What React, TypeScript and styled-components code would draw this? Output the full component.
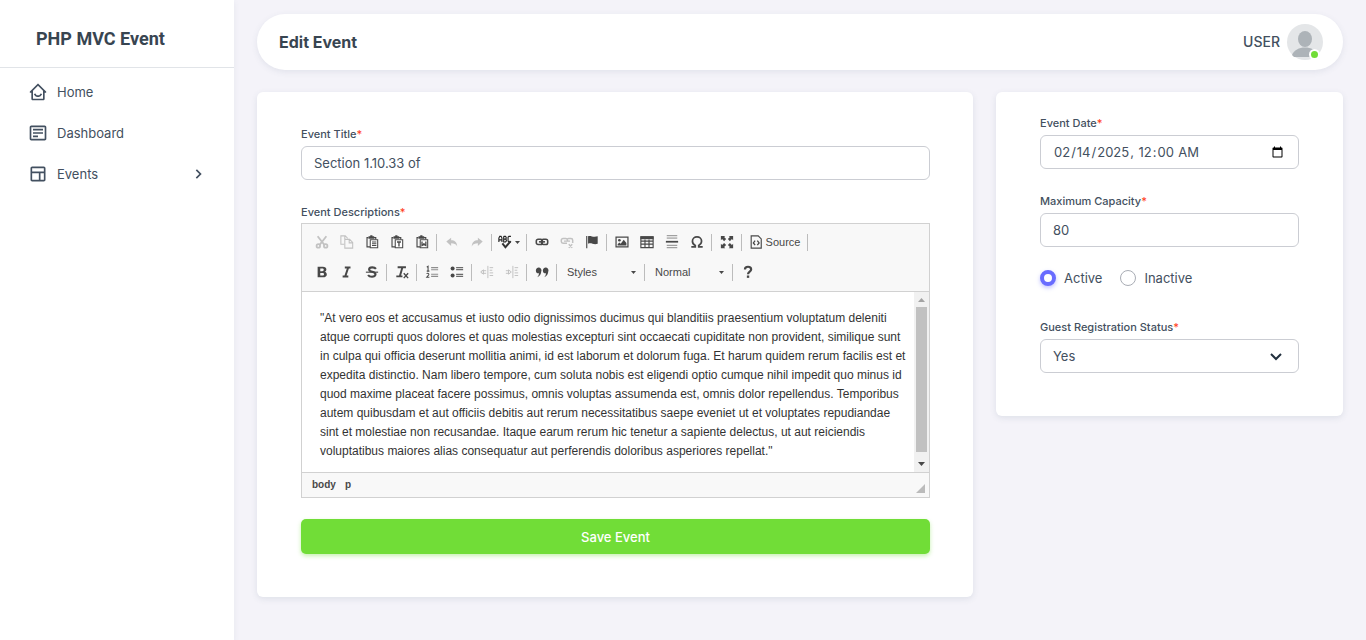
import React from "react";
import styled, { createGlobalStyle, css } from "styled-components";
import { BiChevronDown, BiChevronRight, BiDetail, BiHomeSmile, BiLayout } from "react-icons/bi";

const sans = `Inter, "Liberation Sans", sans-serif`;
const arial = `"Liberation Sans", Arial, sans-serif`;

const GlobalStyle = createGlobalStyle`
  * { box-sizing: border-box; }
  body {
    margin: 0;
    background: #f4f3f9;
    color: #435060;
    font: 13px/20px ${sans};
  }
  button, input, select { font: inherit; color: inherit; }
`;

const Page = styled.div`
  display: flex;
  min-height: 100vh;
`;

const Sidebar = styled.aside`
  flex: 0 0 234px;
  background: #fff;
  box-shadow: 0 2px 6px rgba(67, 89, 113, 0.08);
`;

const Brand = styled.a`
  display: block;
  padding: 27px 36px 16px;
  border-bottom: 1px solid #e1e4e8;
  color: #384551;
  font-family: Roboto, ${sans};
  font-size: 18px;
  line-height: 24px;
  font-weight: 700;
  text-decoration: none;
`;

const Menu = styled.nav`
  display: flex;
  flex-direction: column;
  padding-top: 5px;
  gap: 4px;
`;

const MenuLink = styled.a`
  display: flex;
  align-items: center;
  height: 37px;
  padding: 0 26px 0 28px;
  gap: 9px;
  color: #435060;
  text-decoration: none;
  svg:last-child:not(:first-child) { margin-left: auto; }
`;

const Main = styled.main`
  flex: 1;
  min-width: 0;
  padding: 14px 23px 43px;
`;

const Navbar = styled.header`
  display: flex;
  align-items: center;
  justify-content: space-between;
  height: 56px;
  padding: 0 20px 0 22px;
  border-radius: 28px;
  background: #fff;
  box-shadow: 0 2px 6px rgba(67, 89, 113, 0.1);
`;

const PageTitle = styled.h1`
  margin: 0;
  color: #384551;
  font-size: 16px;
  line-height: 24px;
  font-weight: 700;
`;

const Account = styled.button`
  display: flex;
  align-items: center;
  gap: 7px;
  padding: 0;
  border: 0;
  background: none;
  font-size: 14px;
  font-weight: 500;
`;

const Avatar = styled.span`
  position: relative;
  width: 36px;
  height: 36px;
  svg { display: block; }
`;

const Online = styled.span`
  position: absolute;
  right: 3px;
  bottom: 0;
  width: 11px;
  height: 11px;
  border: 2px solid #fff;
  border-radius: 50%;
  background: #71dd37;
`;

const Form = styled.form`
  display: flex;
  align-items: flex-start;
  gap: 23px;
  margin-top: 22px;
`;

const Card = styled.section<{ $side?: boolean }>`
  flex: ${(p) => (p.$side ? "0 0 347px" : "1 1 0")};
  min-width: 0;
  padding: ${(p) => (p.$side ? "21px 44px 43px" : "32px 43px 43px 44px")};
  border-radius: 6px;
  background: #fff;
  box-shadow: 0 2px 6px rgba(67, 89, 113, 0.12);
`;

const Field = styled.div<{ $gap?: number }>`
  margin-bottom: ${(p) => p.$gap ?? 22}px;
`;

const labelStyle = css`
  display: block;
  margin-bottom: 2px;
  font-size: 11px;
  line-height: 20px;
  font-weight: 500;
`;
const Label = styled.label`${labelStyle}`;
const EditorLabel = styled.div`
  ${labelStyle}
  margin-bottom: 1px;
`;
const Star = styled.span`color: #ff3e1d;`;

const controlStyle = css`
  display: block;
  width: 100%;
  height: 34px;
  padding: 0 12px;
  border: 1px solid #cbcdd3;
  border-radius: 6px;
  background: #fff;
  outline: 0;
`;
const Input = styled.input`${controlStyle}`;

const SelectBox = styled.div`
  display: grid;
  align-items: center;
  > * { grid-area: 1 / 1; }
  svg { justify-self: end; margin-right: 11px; pointer-events: none; color: #22303e; }
`;
const Select = styled.select`
  ${controlStyle}
  appearance: none;
`;

const Choices = styled.div`
  display: flex;
  gap: 18px;
  margin-bottom: 29px;
`;
const Choice = styled.label`
  display: flex;
  align-items: center;
  gap: 8px;
`;
const Radio = styled.input`
  appearance: none;
  width: 16px;
  height: 16px;
  margin: 0;
  border: 1px solid #a9adb5;
  border-radius: 50%;
  background: #fff;
  &:checked {
    border: 4px solid #696cff;
    box-shadow: 0 2px 4px rgba(105, 108, 255, 0.4);
  }
`;

const Save = styled.button`
  display: block;
  width: 100%;
  height: 35px;
  border: 0;
  border-radius: 5px;
  background: #71dd37;
  color: #fff;
  font-weight: 500;
  box-shadow: 0 2px 4px rgba(113, 221, 55, 0.4);
`;

const Editor = styled.div`
  margin-bottom: 21px;
  border: 1px solid #d1d1d1;
  font-family: ${arial};
`;
const Tools = styled.div`
  padding: 3px 7px 4px;
  background: #f8f8f8;
  border-bottom: 1px solid #d1d1d1;
`;
const ToolRow = styled.div`
  display: flex;
  align-items: center;
  height: 30px;
`;
const Tool = styled.button<{ $w?: number }>`
  display: flex;
  align-items: center;
  justify-content: center;
  gap: 3px;
  width: ${(p) => p.$w ?? 25}px;
  height: 25px;
  padding: 0;
  border: 0;
  background: none;
  color: #484848;
  font-size: 11px;
  &:disabled { color: #484848; opacity: 0.3; }
`;
const Combo = styled(Tool)`
  justify-content: space-between;
  padding: 0 6px 0 8px;
`;
const Separator = styled.span`
  width: 1px;
  height: 17px;
  margin: 0 2px;
  background: #bcbcbc;
`;
const Viewport = styled.div`
  display: flex;
  height: 180px;
`;
const Content = styled.div`
  flex: 1;
  min-width: 0;
  padding: 17px 5px 0 18px;
  outline: 0;
  overflow: hidden;
  color: #333;
  font-size: 12px;
  line-height: 19px;
  p { margin: 0; }
`;
const ScrollTrack = styled.div`
  display: flex;
  flex-direction: column;
  align-items: center;
  width: 15px;
  background: #f1f1f1;
  svg { display: block; }
`;
const ScrollThumb = styled.div`
  width: 11px;
  height: 145px;
  background: #c1c1c1;
`;
const Footer = styled.div`
  display: flex;
  justify-content: space-between;
  height: 25px;
  padding: 0 4px 0 10px;
  border-top: 1px solid #d1d1d1;
  background: #f8f8f8;
  svg { align-self: flex-end; margin-bottom: 4px; }
`;
const Path = styled.nav`
  display: flex;
  gap: 9px;
  font-size: 10px;
  line-height: 23px;
  font-weight: 700;
  a { color: #484848; text-decoration: none; }
`;

const Caret = () => (
  <svg width="5" height="3" viewBox="0 0 5 3"><path d="M0 0h5L2.5 3z" fill="#484848" /></svg>
);

const clipboard = (
  <>
    <path d="M6 13.500H2.300V3H4M10 3h2.300v2" fill="none" stroke="currentColor" strokeWidth="1.300" />
    <path d="M4 1.500h2V.3h2.500v1.200h2V4.300H4z" fill="currentColor" />
    <path d="M6 5.500h8.500v9H6z" fill="#fff" stroke="currentColor" strokeWidth="1.200" />
  </>
);

const art: Record<string, React.ReactNode> = {
  cut: <g fill="none" stroke="currentColor" strokeWidth="2"><path d="M3 1.500l7.500 9.500M13 1.500L5.500 11" /><circle cx="3.800" cy="12.500" r="2" /><circle cx="12.200" cy="12.500" r="2" /></g>,
  copy: <g fill="none" stroke="currentColor" strokeWidth="1.200"><path d="M5 10.500H1V1h5l3 3M5.500 1v3.500" /><path d="M5.500 5h5.500l3.500 3.500V15h-9zM10.500 5v4h4" /></g>,
  paste: <>{clipboard}<path d="M8 8h5M8 10h5M8 12h5" stroke="currentColor" strokeWidth="1.200" /></>,
  pasteText: <>{clipboard}<path d="M8 8h4.500M10.250 8v5" stroke="currentColor" strokeWidth="1.500" /></>,
  pasteWord: <>{clipboard}<path d="M8 7.500V12l2.200-1.500 2.200 1.500V7.500M10.200 9v2" fill="none" stroke="currentColor" strokeWidth="1.500" /></>,
  undo: <path d="M7 3v3c4 0 6.500 2 7 7-1.500-2.700-3.500-3.500-7-3.500v3L1.500 7.500z" fill="currentColor" />,
  redo: <path d="M9 3v3c-4 0-6.500 2-7 7 1.500-2.700 3.500-3.500 7-3.500v3l5.500-5z" fill="currentColor" />,
  spell: <><g fill="none" stroke="#222" strokeWidth="1.300"><path d="M1 8V3.500l1-2h1.500l1 2V8M1 5.500h3.500M6.500 1.500V8h2l1-1V5.500l-1-.8h-2M6.500 1.500h2l.8.900v1.500l-.8.800M14.800 1.500h-2.300l-1 1v4.500l1 1h2.300" /></g><path d="M5 9.500l3.500 4.500 6-7" fill="none" stroke="#333" strokeWidth="2.300" /></>,
  link: <g fill="none" stroke="currentColor" strokeWidth="1.800"><rect x="1.500" y="4.800" width="7" height="6" rx="2" /><rect x="7.500" y="4.800" width="7" height="6" rx="2" /><path d="M4.500 7.800h7" /></g>,
  unlink: <g fill="none" stroke="currentColor" strokeWidth="1.700"><path d="M8 9.500H3.500a2 2 0 0 1-2-2V6a2 2 0 0 1 2-2h3a2 2 0 0 1 2 2v1M8 5.500A2 2 0 0 1 10 4h2.500a2 2 0 0 1 2 2v3M4.500 7h7M10 10.500l4 4M14 10.500l-4 4" /></g>,
  flag: <><path d="M2 1v14" stroke="currentColor" strokeWidth="1.300" /><path d="M3.500 1.500c3-1.500 5 1.500 11 0V10c-5 1.500-7-1.500-11 0z" fill="currentColor" /></>,
  image: <><path d="M1.200 2.500h13.600v11H1.200z" fill="none" stroke="currentColor" strokeWidth="1.400" /><circle cx="5" cy="6" r="1.500" fill="currentColor" /><path d="M3 12v-1.500l2-2 1.500 1.500 3.500-4.500 3 3.500v3z" fill="currentColor" /></>,
  table: <><path d="M1 2h14v12.500H1zM1 7h14M1 10.500h14M5.700 5v9M10.300 5v9" fill="none" stroke="currentColor" strokeWidth="1.300" /><path d="M.5 1.500h15v3.300H.5z" fill="currentColor" /></>,
  rule: <><path d="M2 .8h12M2 3.500h12M2 11.800h12M2 14.500h12" stroke="currentColor" opacity=".7" /><path d="M1 7.700h14" stroke="currentColor" strokeWidth="2" /></>,
  omega: <path d="M1.500 13.500H6V12C3.500 10.500 2.800 9 2.800 7a5.200 4.800 0 0 1 10.400 0c0 2-.7 3.500-3.200 5v1.500h4.500" fill="none" stroke="currentColor" strokeWidth="2" />,
  maximize: <path d="M1 1h5L4.700 2.400 7 4.700 4.700 7 2.400 4.700 1 6zM15 1v5l-1.400-1.300L11.300 7 9 4.700l2.300-2.300L10 1zM1 15v-5l1.400 1.300L4.700 9 7 11.300l-2.300 2.300L6 15zM15 15h-5l1.300-1.400L9 11.300 11.300 9l2.300 2.300L15 10z" fill="currentColor" />,
  source: <><path d="M2.500 1h8l3.500 3.500V15H2.500z" fill="none" stroke="currentColor" strokeWidth="1.300" /><path d="M7 6.500L5 9l2 2.500M9.500 6.500l2 2.500-2 2.500" fill="none" stroke="currentColor" strokeWidth="1.500" /></>,
  bold: <path fillRule="evenodd" d="M3 2h6c2.500 0 4 1 4 3 0 1.400-.8 2.400-2 2.800 1.600.3 2.500 1.400 2.500 3 0 2.200-1.700 3.200-4.200 3.200H3zm3 2v3h2.200c1.200 0 1.800-.5 1.800-1.500S9.400 4 8.200 4zm0 5v3h2.500c1.200 0 1.800-.5 1.800-1.500S9.700 9 8.500 9z" fill="currentColor" />,
  italic: <path d="M5.500 2.800H12M3 13.200h6.500M9.300 3L6 13" fill="none" stroke="currentColor" strokeWidth="2.200" />,
  strike: <><path d="M12.500 4.500C11.500 3 10 2.700 8.300 2.700 6 2.700 4.700 3.600 4.700 5c0 3.600 7.300 1.800 7.300 5.500 0 2-1.800 2.900-4 2.900s-3.700-.7-4.500-2" fill="none" stroke="currentColor" strokeWidth="2.400" /><path d="M1 8.200h14" stroke="currentColor" strokeWidth="1.300" /></>,
  clear: <><path d="M3 2.500h9.500M1.500 13h7M8.500 2.500L5.500 13" fill="none" stroke="currentColor" strokeWidth="2.200" /><path d="M10 9.500l5 5.500M15 9.500L10 15" stroke="currentColor" strokeWidth="1.600" /></>,
  ol: <><path d="M2 2.500l1.500-1V7M2 7h3M1.800 10c1.500-1.500 3 0 2.500 1.200L2 14h3" fill="none" stroke="currentColor" strokeWidth="1.200" /><path d="M7 3h8M7 5.500h8M7 10.500h8M7 13h8" stroke="currentColor" strokeWidth="1.200" opacity=".6" /></>,
  ul: <><circle cx="3" cy="4" r="2.300" fill="currentColor" /><circle cx="3" cy="12" r="2.300" fill="currentColor" /><path d="M7 3h8M7 5.300h8M7 10.700h8M7 13h8" stroke="currentColor" strokeWidth="1.500" opacity=".8" /></>,
  outdent: <path d="M9 1v14M11 3h4M11 6h3M11 9h4M11 12h4M2 6.500h5M2 9.500h5M.8 8L4 5.500v5z" fill="none" stroke="currentColor" strokeWidth="1.100" />,
  indent: <path d="M9 1v14M11 3h4M11 6h3M11 9h4M11 12h4M1 6.500h4M1 9.500h4M7.200 8L4 5.500v5z" fill="none" stroke="currentColor" strokeWidth="1.100" />,
  quote: <path d="M1 6.200a3.200 3.200 0 1 1 6.200 1C7 10.500 5.500 13 2.500 14c1.500-1.500 2-2.800 2-4.500A3.300 3.300 0 0 1 1 6.200zM9 6.200a3.200 3.200 0 1 1 6.200 1c-.2 3.300-1.700 5.800-4.700 6.800 1.500-1.500 2-2.800 2-4.500A3.300 3.300 0 0 1 9 6.200z" fill="currentColor" />,
  help: <><path d="M4.500 5C4.500 3 6 2 8 2s3.600 1 3.600 3C11.600 7.500 8 7.500 8 10.500" fill="none" stroke="currentColor" strokeWidth="2.500" /><path d="M6.700 12h2.700v2.700H6.700z" fill="currentColor" /></>,
};

const Glyph = ({ name }: { name: string }) => (
  <svg width="14" height="14" viewBox="0 0 16 16" aria-hidden="true">{art[name]}</svg>
);

type Item = [icon: string, title: string, disabled?: boolean];
const Group = ({ items }: { items: Item[] }) => (
  <>
    {items.map(([icon, title, disabled]) => (
      <Tool key={icon} type="button" aria-label={title} disabled={disabled}><Glyph name={icon} /></Tool>
    ))}
    <Separator />
  </>
);

export default function App() {
  return (
    <Page>
      <GlobalStyle />
      <Sidebar>
        <Brand href="#">PHP MVC Event</Brand>
        <Menu>
          <MenuLink href="#home"><BiHomeSmile size={20} />Home</MenuLink>
          <MenuLink href="#dashboard"><BiDetail size={20} />Dashboard</MenuLink>
          <MenuLink href="#events"><BiLayout size={20} />Events<BiChevronRight size={20} /></MenuLink>
        </Menu>
      </Sidebar>
      <Main>
        <Navbar>
          <PageTitle>Edit Event</PageTitle>
          <Account type="button">
            USER
            <Avatar>
              <svg width="36" height="36" viewBox="0 0 36 36" aria-hidden="true">
                <circle cx="18" cy="18" r="18" fill="#e4e6e8" />
                <ellipse cx="18" cy="15" rx="7" ry="8" fill="#adb3b8" />
                <path d="M5 31c2-5 7-7.500 13-7.500S29 26 31 31l-2 2H7z" fill="#adb3b8" />
              </svg>
              <Online />
            </Avatar>
          </Account>
        </Navbar>
        <Form onSubmit={(e) => e.preventDefault()}>
          <Card>
            <Field>
              <Label htmlFor="title">Event Title<Star>*</Star></Label>
              <Input id="title" defaultValue="Section 1.10.33 of" />
            </Field>
            <EditorLabel id="desc-label">Event Descriptions<Star>*</Star></EditorLabel>
            <Editor>
              <Tools role="toolbar" aria-label="Editor toolbar">
                <ToolRow>
                  <Group items={[["cut", "Cut", true], ["copy", "Copy", true], ["paste", "Paste"], ["pasteText", "Paste as plain text"], ["pasteWord", "Paste from Word"]]} />
                  <Group items={[["undo", "Undo", true], ["redo", "Redo", true]]} />
                  <Tool type="button" aria-label="Spell check" $w={30}><Glyph name="spell" /><Caret /></Tool>
                  <Separator />
                  <Group items={[["link", "Link"], ["unlink", "Unlink", true], ["flag", "Anchor"]]} />
                  <Group items={[["image", "Image"], ["table", "Table"], ["rule", "Horizontal line"], ["omega", "Special character"]]} />
                  <Group items={[["maximize", "Maximize"]]} />
                  <Tool type="button" $w={61}><Glyph name="source" />Source</Tool>
                  <Separator />
                </ToolRow>
                <ToolRow>
                  <Group items={[["bold", "Bold"], ["italic", "Italic"], ["strike", "Strikethrough"]]} />
                  <Group items={[["clear", "Remove format"]]} />
                  <Group items={[["ol", "Numbered list"], ["ul", "Bulleted list"]]} />
                  <Group items={[["outdent", "Decrease indent", true], ["indent", "Increase indent", true]]} />
                  <Group items={[["quote", "Block quote"]]} />
                  <Combo type="button" $w={83}>Styles<Caret /></Combo>
                  <Separator />
                  <Combo type="button" $w={83}>Normal<Caret /></Combo>
                  <Separator />
                  <Tool type="button" aria-label="Help"><Glyph name="help" /></Tool>
                </ToolRow>
              </Tools>
              <Viewport>
                <Content role="textbox" aria-multiline="true" aria-labelledby="desc-label" contentEditable suppressContentEditableWarning>
                  <p>
                    "At vero eos et accusamus et iusto odio dignissimos ducimus qui blanditiis praesentium voluptatum deleniti
                    atque corrupti quos dolores et quas molestias excepturi sint occaecati cupiditate non provident, similique sunt
                    in culpa qui officia deserunt mollitia animi, id est laborum et dolorum fuga. Et harum quidem rerum facilis est et
                    expedita distinctio. Nam libero tempore, cum soluta nobis est eligendi optio cumque nihil impedit quo minus id
                    quod maxime placeat facere possimus, omnis voluptas assumenda est, omnis dolor repellendus. Temporibus
                    autem quibusdam et aut officiis debitis aut rerum necessitatibus saepe eveniet ut et voluptates repudiandae
                    sint et molestiae non recusandae. Itaque earum rerum hic tenetur a sapiente delectus, ut aut reiciendis
                    voluptatibus maiores alias consequatur aut perferendis doloribus asperiores repellat."
                  </p>
                </Content>
                <ScrollTrack>
                  <svg width="15" height="15" viewBox="0 0 15 15"><path d="M4 10h7L7.500 6z" fill="#a3a3a3" /></svg>
                  <ScrollThumb />
                  <svg width="15" height="20" viewBox="0 0 15 20"><path d="M4 10h7l-3.500 4z" fill="#484848" /></svg>
                </ScrollTrack>
              </Viewport>
              <Footer>
                <Path aria-label="Element path"><a href="#body">body</a><a href="#p">p</a></Path>
                <svg width="9" height="9" viewBox="0 0 9 9" aria-hidden="true"><path d="M9 0v9H0z" fill="#bbb" /></svg>
              </Footer>
            </Editor>
            <Save type="submit">Save Event</Save>
          </Card>
          <Card $side>
            <Field>
              <Label htmlFor="date">Event Date<Star>*</Star></Label>
              <Input id="date" type="datetime-local" defaultValue="2025-02-14T00:00" />
            </Field>
            <Field $gap={21}>
              <Label htmlFor="capacity">Maximum Capacity<Star>*</Star></Label>
              <Input id="capacity" type="number" defaultValue="80" />
            </Field>
            <Choices>
              <Choice><Radio type="radio" name="status" defaultChecked />Active</Choice>
              <Choice><Radio type="radio" name="status" />Inactive</Choice>
            </Choices>
            <Field $gap={0}>
              <Label htmlFor="guest">Guest Registration Status<Star>*</Star></Label>
              <SelectBox>
                <Select id="guest" defaultValue="Yes"><option>Yes</option><option>No</option></Select>
                <BiChevronDown size={24} />
              </SelectBox>
            </Field>
          </Card>
        </Form>
      </Main>
    </Page>
  );
}
